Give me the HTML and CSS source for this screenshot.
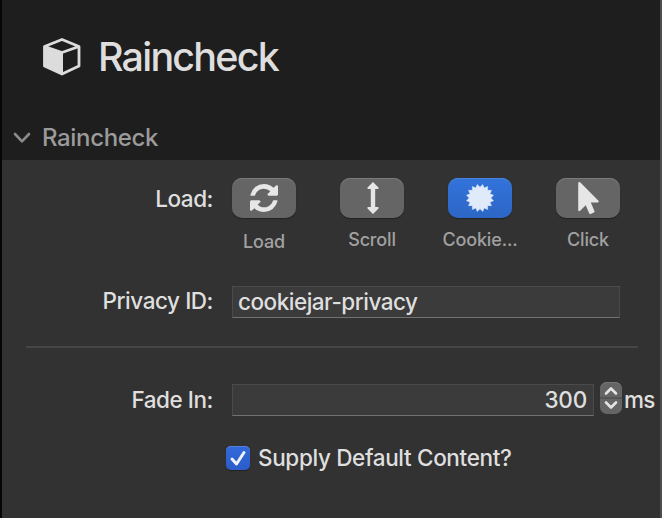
FILE: index.html
```html
<!DOCTYPE html>
<html lang="en">
<head>
<meta charset="utf-8">
<title>Raincheck</title>
<link rel="stylesheet" href="styles.css">
</head>
<body>
<div class="inspector">
  <header class="header">
    <div class="title-row">
      <svg class="cube" viewBox="0 0 38 38"><path class="cube-edge" d="M1.5 8.5 19 1.5 36 8.5V28L19 36 1.5 28Z M1.5 8.5 19 14.5 36 8.5"/><path d="M1 8.5 20 14.5V37L1 28Z"/></svg>
      <h1 class="title">Raincheck</h1>
    </div>
    <div class="section-row">
      <svg class="chevron" viewBox="0 0 18 12"><path d="M2 2 9 9.300 16 2"/></svg>
      <h2 class="section-title">Raincheck</h2>
    </div>
  </header>
  <main class="panel">
    <div class="row load-row">
      <span class="label label-load">Load:</span>
      <div class="choices">
        <div class="choice">
          <button class="tile"><svg class="icon-refresh" viewBox="128 128 1536 1536"><path d="M1639 1056q0 5-1 7-64 268-268 434.500t-478 166.500q-146 0-282.500-55t-243.500-157l-129 129q-19 19-45 19t-45-19-19-45v-448q0-26 19-45t45-19h448q26 0 45 19t19 45-19 45l-137 137q71 66 161 102t187 36q134 0 250-65t186-179q11-17 53-117 8-23 30-23h192q13 0 22.500 9.500t9.500 22.500zm25-800v448q0 26-19 45t-45 19h-448q-26 0-45-19t-19-45 19-45l138-138q-148-137-349-137-134 0-250 65t-186 179q-11 17-53 117-8 23-30 23h-199q-13 0-22.500-9.500t-9.500-22.500v-7q65-268 270-434.500t480-166.500q146 0 284 55.500t245 156.500l130-129q19-19 45-19t45 19 19 45z"/></svg></button>
          <span class="caption caption-load">Load</span>
        </div>
        <div class="choice">
          <button class="tile"><svg class="icon-scroll" viewBox="0 0 12 32"><path d="M6 0 11.500 5.600Q12 7 10.800 7H8.200V25H10.800Q12 25 11.500 26.400L6 32 .5 26.400Q0 25 1.200 25H3.800V7H1.200Q0 7 .5 5.600Z"/></svg></button>
          <span class="caption caption-scroll">Scroll</span>
        </div>
        <div class="choice">
          <button class="tile selected"><svg class="icon-seal" viewBox="-14 -14 28 28"><path id="seal" d=""/></svg></button>
          <span class="caption caption-cookie">Cookie...</span>
        </div>
        <div class="choice">
          <button class="tile"><svg class="icon-pointer" viewBox="0 0 1152 1792"><path d="M1133 1043q31 30 14 69-17 40-59 40h-382l201 476q10 25 0 49t-34 35l-177 75q-25 10-49 0t-35-34l-191-452-312 312q-19 19-45 19-12 0-24-5-40-17-40-59v-1504q0-42 40-59 12-5 24-5 27 0 45 19z"/></svg></button>
          <span class="caption caption-click">Click</span>
        </div>
      </div>
    </div>
    <div class="row">
      <span class="label label-privacy">Privacy ID:</span>
      <div class="field wide"><span class="value">cookiejar-privacy</span></div>
    </div>
    <hr class="divider">
    <div class="row">
      <span class="label label-fade">Fade In:</span>
      <div class="field number"><span class="amount">300</span></div>
      <svg class="stepper" viewBox="0 0 22 32"><path d="M6 11.500 11 6.500 16 11.500M6 20.500 11 25.500 16 20.500"/><path class="split" d="M0 16H22"/></svg>
      <span class="unit">ms</span>
    </div>
    <div class="check-row">
      <svg class="checkbox" viewBox="0 0 24 24"><path d="M6 13 10.500 18 18 6.500"/></svg>
      <span class="check-label">Supply Default Content?</span>
    </div>
  </main>
</div>
<script src="seal.js"></script>
</body>
</html>
```
FILE: seal.js
```js
const points = 16;
const path = [];
for (let i = 0; i < points * 2; i++) {
  const radius = i % 2 ? 10.8 : 13.8;
  const angle = (i - 1) * Math.PI / points;
  path.push((radius * Math.sin(angle)).toFixed(2) + ' ' + (-radius * Math.cos(angle)).toFixed(2));
}
document.getElementById('seal').setAttribute('d', 'M' + path.join('L') + 'Z');
```
FILE: styles.css
```css
* { box-sizing: border-box; }
body { margin: 0; background: #323232; font-family: Inter, "Liberation Sans", sans-serif; font-weight: 500; color: #dfdfdf; }
h1, h2 { margin: 0; font-weight: 500; }
svg { display: block; flex: none; }
span, h1, h2 { white-space: nowrap; }
.inspector { width: 662px; height: 518px; overflow: hidden; border-left: 2px solid #060606; border-right: 2px solid #4d4d4d; background: #323232; }
.header { height: 160px; background: #1e1e1e; padding-top: 32px; }
.title-row { display: flex; align-items: center; height: 50px; padding-left: 41px; }
.cube { width: 38px; height: 38px; fill: #dcdcdc; }
.cube-edge { fill: none; stroke: #dcdcdc; stroke-width: 2.8; stroke-linejoin: round; }
.title { margin-left: 17px; font-size: 39.5px; line-height: 50px; letter-spacing: -1.8px; color: #dedede; }
.section-row { display: flex; align-items: center; height: 32px; margin-top: 40px; padding-left: 11px; }
.chevron { width: 18px; height: 12px; fill: none; stroke: #8b8b8b; stroke-width: 2.6; stroke-linecap: round; stroke-linejoin: round; }
.section-title { margin-left: 11px; font-size: 24px; line-height: 32px; letter-spacing: -0.35px; color: #9b9b9b; }
.panel { padding-top: 18px; }
.row { display: flex; height: 32px; }
.load-row { height: 108px; }
.label { width: 212px; padding-right: 1px; font-size: 22.5px; line-height: 30px; letter-spacing: -0.45px; text-align: right; }
.label-load { line-height: 41px; }
.label-fade { line-height: 32px; }
.choices { display: flex; gap: 18px; margin-left: 5px; }
.choice { width: 90px; display: flex; flex-direction: column; align-items: center; }
.tile { width: 64px; height: 40px; padding: 0; border: 0; border-radius: 10px; display: flex; align-items: center; justify-content: center; background: #656565; box-shadow: inset 0 1px #7b7b7b, 0 1px 1px #222; }
.tile svg { fill: #e6e6e6; }
.selected { background: linear-gradient(#3273db, #2d66c5); box-shadow: inset 0 1px #4a84df, 0 1px 1px #222; }
.icon-refresh { width: 28px; height: 28px; }
.icon-scroll { width: 12px; height: 32px; margin-left: 1px; }
.tile .icon-seal { width: 28px; height: 28px; fill: #e0eafa; }
#seal { stroke: #e0eafa; stroke-width: 0.5; stroke-linejoin: round; }
.icon-pointer { width: 21px; height: 32px; }
.caption { margin-top: 10px; font-size: 18px; line-height: 24px; letter-spacing: -0.15px; color: #a1a1a1; }
.caption-load { margin-top: 12px; }
.field { height: 32px; margin-left: 18px; background: #3b3b3b; border: 1px solid #4b4b4b; border-bottom: 1px solid #717171; font-size: 22.5px; line-height: 30px; letter-spacing: -0.5px; }
.wide { width: 388px; padding-left: 5px; }
.number { width: 362px; padding-right: 6px; letter-spacing: -0.2px; text-align: right; }
.divider { width: 612px; height: 2px; margin: 28px 0 36px 24px; border: 0; background: #464646; }
.stepper { width: 22px; height: 32px; margin: -2px 0 0 6px; border-radius: 7px; background: #656565; box-shadow: inset 0 1px #777; fill: none; stroke: #e4e4e4; stroke-width: 2.6; stroke-linecap: round; stroke-linejoin: round; }
.split { stroke: #505050; stroke-width: 1.5; }
.unit { margin-left: 2px; font-size: 22.5px; line-height: 32px; letter-spacing: -0.8px; }
.check-row { display: flex; align-items: center; height: 28px; margin-top: 28px; padding-left: 224px; }
.checkbox { width: 24px; height: 24px; border-radius: 5px; background: linear-gradient(#3269dc, #2b5cc9); box-shadow: inset 0 1px #5481de, 0 1px 1px #222; fill: none; stroke: #eef2fc; stroke-width: 3; stroke-linecap: round; stroke-linejoin: round; }
.check-label { margin-left: 8px; font-size: 22.5px; line-height: 28px; letter-spacing: -0.35px; }
```
